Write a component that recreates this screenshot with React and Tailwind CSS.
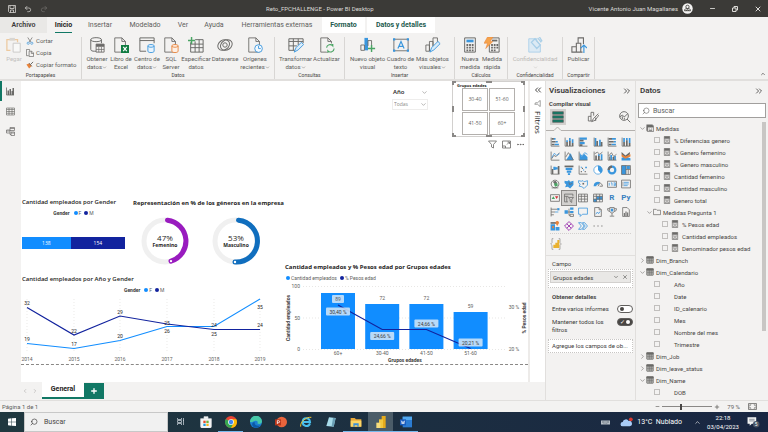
import clsx from "clsx"
import { ChevronDown, ChevronUp, ChevronRight, ChevronLeft, ChevronsLeft, ChevronsRight, Search, X, Ellipsis, Undo2, Redo2, Plus, Minus } from "lucide-react"

const GRAY = "#6b6a68"
const BLUE = "#3a96dd"

// small drawing helper: g / b are stroked paths, gf / bf are filled ones
function Glyph({ g, b, gf, bf, of, o, size = "size-[10px]", sw = 1.6, children }) {
    return (
        <svg viewBox="0 0 18 18" className={clsx("shrink-0", size)} fill="none" aria-hidden="true">
            {bf && <path d={bf} fill={BLUE} />}
            {gf && <path d={gf} fill={GRAY} />}
            {of && <path d={of} fill="#e8833a" />}
            {g && <path d={g} stroke={GRAY} strokeWidth={sw} />}
            {b && <path d={b} stroke={BLUE} strokeWidth={sw} />}
            {o && <path d={o} stroke="#e8833a" strokeWidth={sw} />}
            {children}
        </svg>
    )
}

/* ---------- title bar ---------- */

function TitleBar() {
    return (
        <header className="grid h-[17px] shrink-0 grid-cols-[266fr_502fr] items-center bg-[#3b3a37] text-[6px] text-[#dddbd8]">
            <div className="flex items-center gap-2 pl-2">
                <button aria-label="Guardar">
                    <svg viewBox="0 0 16 16" className="size-2" fill="none" stroke="currentColor" strokeWidth="1.5">
                        <path d="M1 1h14v14H3l-2-2zM4 1v6h8V1M5 15v-5h6v5" />
                    </svg>
                </button>
                <button aria-label="Deshacer"><Undo2 className="size-2" /></button>
                <button aria-label="Rehacer"><Redo2 className="size-2 text-[#73716e]" /></button>
            </div>
            <div className="flex items-center justify-between">
                <h1>Reto_FPCHALLENGE - Power BI Desktop</h1>
                <div className="flex items-center pr-[6px]">
                    <span>Vicente Antonio Juan Magallanes</span>
                    <svg viewBox="0 0 20 20" className="ml-1 size-[11px]" fill="none" stroke="#3b3a37" strokeWidth="1.5">
                        <circle cx="10" cy="10" r="9.5" fill="#f3f2f1" stroke="none" />
                        <circle cx="10" cy="7" r="3" />
                        <path d="M4.500 14c0-3 2-4 5.500-4s5.500 1 5.500 4zM7 14l3-2 3 2" />
                    </svg>
                    <button aria-label="Minimizar" className="ml-4"><Minus className="size-[7px]" strokeWidth={3} /></button>
                    <button aria-label="Restaurar" className="ml-4">
                        <svg viewBox="0 0 12 12" className="size-[6px]" fill="none" stroke="currentColor" strokeWidth="2">
                            <path d="M1 4h7v7H1zM4 4V1h7v7H8" />
                        </svg>
                    </button>
                    <button aria-label="Cerrar" className="ml-4"><X className="size-2" strokeWidth={3} /></button>
                </div>
            </div>
        </header>
    )
}

/* ---------- ribbon ---------- */

const TABS = [
    { name: "Archivo", cls: "w-[47px] bg-[#e9e8e6] font-semibold text-[#3b3a39]" },
    { name: "Inicio", cls: "w-[33px] font-bold text-[#252423]", active: true },
    { name: "Insertar", cls: "w-[40px]" },
    { name: "Modelado", cls: "w-[50px]" },
    { name: "Ver", cls: "w-[26px]" },
    { name: "Ayuda", cls: "w-[36px]" },
    { name: "Herramientas externas", cls: "w-[90px]" },
    { name: "Formato", cls: "mr-[2px] w-[43px] bg-white font-bold text-[#1c5a4e]" },
    { name: "Datos y detalles", cls: "w-[68px] bg-white font-bold text-[#1c5a4e]" },
]

function Tabs() {
    return (
        <nav className="flex h-4 shrink-0 text-[7px] text-[#605e5c]">
            {TABS.map((t) => (
                <button key={t.name} className={clsx("flex shrink-0 items-center justify-center whitespace-nowrap", t.cls)}>
                    <span className={clsx("flex h-full items-center border-y", t.active ? "border-t-transparent border-b-[#117865]" : "border-transparent")}>{t.name}</span>
                </button>
            ))}
        </nav>
    )
}

const SHEET = "M2 1h8l4 4v12H2zM10 1v4h4"

const ICONS = {
    obtener: <Glyph size="size-4" sw={1.1} g="M2 3v11c0 1.500 2 2 4 2h2M14 3v4M2 3c0-3 12-3 12 0s-12 3-12 0"><path d="M8 8h9v9H8z" fill="#f3f2f1" stroke={GRAY} /><path d="M8 8h9v3H8z" fill={GRAY} /><path d="M11 11v6M14 11v6M8 14h9" stroke={GRAY} strokeWidth=".8" /></Glyph>,
    libro: <Glyph size="size-4" sw={1} g={SHEET}><path d="M9 9h9v9H9z" fill="#107c41" /><path d="M11.500 11l4 5M15.500 11l-4 5" stroke="#fff" strokeWidth="1.300" /></Glyph>,
    centro: <Glyph size="size-4" sw={1.1} g="M8 16H1V1h16v6M1 4h16"><path d="M10 10v6c0 2 7 2 7 0v-6c0-2-7-2-7 0s7 2 7 0" fill="#e8f3fc" stroke={BLUE} /></Glyph>,
    sql: <Glyph size="size-4" sw={1} g={SHEET}><path d="M10 10v6c0 2 7 2 7 0v-6c0-2-7-2-7 0s7 2 7 0" fill="#fdf0e6" stroke="#e8833a" /></Glyph>,
    especificar: <Glyph size="size-4" sw={1.1} g="M3 6v11h14V3H8M3 8h14M3 12h14M8 5v12M12.500 3v14"><path d="M4 0v8M0 4h8" stroke="#4aa564" strokeWidth="1.600" /></Glyph>,
    dataverse: (
        <Glyph size="size-4">
            <g stroke={GRAY} strokeWidth="1.100">
                <ellipse cx="7.500" cy="9" rx="7" ry="5.500" transform="rotate(-35 7.500 9)" />
                <ellipse cx="10.500" cy="9" rx="7" ry="5.500" transform="rotate(-35 10.500 9)" />
                <circle cx="9" cy="9" r="2.500" />
            </g>
        </Glyph>
    ),
    origenes: <Glyph size="size-4" sw={1} g={SHEET}><circle cx="13" cy="13" r="4.300" fill="#f3f9fe" stroke={BLUE} /><path d="M13 10v3h2.500" stroke={BLUE} /></Glyph>,
    transformar: <Glyph size="size-4" sw={1.1} g="M8 15H1V2h16v5M1 5h16M1 10h9M6 2v13M11.500 2v7"><path d="M7 17l2-5 6-6 2.500 2.500-6 6z" fill="#d9ecfa" stroke={BLUE} /></Glyph>,
    actualizar: <Glyph size="size-4" sw={1} g={SHEET}><circle cx="12.500" cy="12.500" r="5.500" fill="#f3f2f1" /><path d="M8.500 12a4 4 0 0 1 7-2v-2M17 13a4 4 0 0 1-7 2.500v2" stroke="#4aa564" strokeWidth="1.300" /></Glyph>,
    nuevo: <Glyph size="size-4" sw={1} g="M1 15V9h4v6zM9 10V4h4v6" bf="M5 1h4v14H5z"><path d="M13 9v8M9 13h8" stroke="#4aa564" strokeWidth="1.600" /></Glyph>,
    cuadro: <Glyph size="size-4" sw={1} g="M1 2.500h16v13H1z"><path d="M5.500 13L9 5l3.500 8M6.500 10.500h5" stroke={BLUE} strokeWidth="1.300" /><path d="M0 1.500h2.500v2.500H0zM15.500 1.500H18v2.500h-2.500zM0 14h2.500v2.500H0zM15.500 14H18v2.500h-2.500z" fill={BLUE} /></Glyph>,
    mas: <Glyph size="size-4" sw={1} g="M1 16V9h4v7zM5 16V5h4v6M9 10V1h5v5"><path d="M5.500 17l2-5 7-7 2.500 2.500-7 7z" fill="#d9ecfa" stroke={BLUE} /></Glyph>,
    nueva: <Glyph size="size-4" sw={1.1} g="M3 1h12v16H3z" bf="M5 3h8v3H5z" gf="M5 8h2v2H5zM8 8h2v2H8zM11 8h2v2h-2zM5 11h2v2H5zM8 11h2v2H8zM11 11h2v2h-2zM5 14h2v2H5zM8 14h2v2H8zM11 14h2v2h-2z" />,
    medida: <Glyph size="size-4" sw={1.1} g="M6 1h11v16H6z" gf="M8 8h2v2H8zM11 8h2v2h-2zM14 8h2v2h-2zM8 11h2v2H8zM11 11h2v2h-2zM14 11h2v2h-2zM8 14h2v2H8zM11 14h2v2h-2z"><path d="M9 3h6v2H9z" fill={GRAY} /><path d="M4 0h6L7 5h3L2 13l2-6H0z" fill="#f5a34c" stroke="#e8833a" strokeWidth=".6" /></Glyph>,
    confid: <Glyph size="size-4"><path d="M2 2h9v3l4 4v8H2z" fill="#dceaf4" stroke="#a9cfe8" /><path d="M5 6l6 7 4-4-6-7zM12 1l4 5M14 0l3 5" stroke="#a9cfe8" strokeWidth="1.500" /></Glyph>,
    publicar: <Glyph size="size-4" sw={1.2} g="M1 17v-6h5v6zM6 17V7h5v10zM8 7V1h6v7M6 17h7"><path d="M14.500 18V9M11 12.500L14.500 9l3.500 3.500" stroke={BLUE} strokeWidth="1.300" /></Glyph>,
    pegar: <Glyph size="size-4"><path d="M5 15H1V3h12v3" stroke="#edc99f" strokeWidth="1.400" /><path d="M4 1h6v3H4z" fill="#d8d6d3" /><path d="M8 7h8v10H8z" fill="#f8f8f7" stroke="#c8c6c4" /></Glyph>,
}

const GROUPS = [
    {
        name: "Datos", cls: "w-[193px]", items: [
            ["obtener", "w-6", "Obtener", "datos", true],
            ["libro", "w-6", "Libro de", "Excel"],
            ["centro", "w-7", "Centro de", "datos", true],
            ["sql", "w-5", "SQL", "Server"],
            ["especificar", "w-[30px]", "Especificar", "datos"],
            ["dataverse", "w-7", "Dataverse", ""],
            ["origenes", "w-8", "Orígenes", "recientes", true],
        ]
    },
    { name: "Consultas", cls: "w-[70px]", items: [["transformar", "w-[34px]", "Transformar", "datos", true], ["actualizar", "w-7", "Actualizar", ""]] },
    {
        name: "Insertar", cls: "w-[110px]", items: [
            ["nuevo", "w-[34px]", "Nuevo objeto", "visual"],
            ["cuadro", "w-8", "Cuadro de", "texto"],
            ["mas", "w-8", "Más objetos", "visuales", true],
        ]
    },
    { name: "Cálculos", cls: "w-[53px]", items: [["nueva", "w-[22px]", "Nueva", "medida"], ["medida", "w-[22px]", "Medida", "rápida"]] },
    { name: "Confidencialidad", cls: "w-[55px]", items: [["confid", "w-[54px]", "Confidencialidad", "", true, true]] },
    { name: "Compartir", cls: "w-[32px]", items: [["publicar", "w-[30px]", "Publicar", ""]] },
]

function RibbonItem({ item }) {
    const [icon, width, line1, line2, menu, disabled] = item
    return (
        <button disabled={disabled} className={clsx("flex shrink-0 flex-col items-center whitespace-nowrap", width, disabled && "text-[#bab8b5]")}>
            {ICONS[icon]}
            <span className="mt-[2px]">{line1}</span>
            <span className="flex h-2 items-center">{line2}{menu && <ChevronDown className="size-[5px]" />}</span>
        </button>
    )
}

function GroupName({ children }) {
    return <p className="mt-auto text-center text-[5px] leading-[7px] text-[#484644]">{children}</p>
}

function Ribbon() {
    return (
        <div className="flex h-12 shrink-0 border-b-2 border-[#e1dfdd] pt-1 text-[6px] leading-[8px] text-[#605e5c]">
            <section className="flex w-[82px] shrink-0 flex-col border-r border-[#d8d6d4]">
                <div className="flex pl-[6px]">
                    <button disabled className="flex w-4 flex-col items-center text-[#c2c0be]">
                        {ICONS.pegar}
                        <span className="mt-[2px]">Pegar</span>
                    </button>
                    <div className="ml-1 flex flex-col gap-1 whitespace-nowrap">
                        <button className="flex items-center gap-[2px]">
                            <Glyph size="size-2" g="M4 1l7 11M14 1L7 12"><circle cx="5" cy="14" r="2.500" stroke={BLUE} strokeWidth="1.500" /><circle cx="13" cy="14" r="2.500" stroke={BLUE} strokeWidth="1.500" /></Glyph>
                            Cortar
                        </button>
                        <button className="flex items-center gap-[2px]">
                            <Glyph size="size-2" g="M6 15H1V1h7v3M7 5h6l4 4v8H7zM12 5v5h5" />
                            Copia
                        </button>
                        <button className="flex items-center gap-[2px]">
                            <Glyph size="size-2" of="M1 8l7-3 5 6-6 6z" g="M7 5l6 7M10 8l6-6" sw={2.2} />
                            Copiar formato
                        </button>
                    </div>
                </div>
                <GroupName>Portapapeles</GroupName>
            </section>
            {GROUPS.map((g) => (
                <section key={g.name} className={clsx("flex shrink-0 flex-col border-r border-[#d8d6d4]", g.cls)}>
                    <div className="flex justify-center">
                        {g.items.map((it) => <RibbonItem key={it[0]} item={it} />)}
                    </div>
                    <GroupName>{g.name}</GroupName>
                </section>
            ))}
            <button aria-label="Contraer cinta" className="mt-auto ml-auto p-[2px]"><ChevronUp className="size-[6px]" strokeWidth={3} /></button>
        </div>
    )
}

/* ---------- left navigation ---------- */

function SideNav() {
    return (
        <nav className="flex w-[21px] shrink-0 flex-col bg-[#f3f2f1]">
            <button aria-label="Informe" className="flex h-5 items-center border-l-2 border-[#117865] pl-1">
                <Glyph size="size-[9px]" g="M1 1v15h15" gf="M3 7h3v9H3zM7 4h3v12H7zM11 8h2v8h-2zM13 2h3v14h-3z" />
            </button>
            <button aria-label="Datos" className="flex h-5 items-center pl-[6px]">
                <Glyph size="size-[9px]" sw={1.3} g="M1 2h16v14H1zM1 5h16M1 9h16M1 12.500h16M6 2v14M12 2v14" />
            </button>
            <button aria-label="Modelo" className="flex h-5 items-center pl-[6px]">
                <Glyph size="size-[9px]" sw={1.4} g="M8 1h9v6H8zM1 6h7v6H1zM10 10h7v7h-7zM8 12v3h2M8 3h9M10 12h7M1 8h7" />
            </button>
        </nav>
    )
}

/* ---------- report canvas ---------- */

function Legend({ label, items }) {
    return (
        <div className="flex items-center gap-[3px] font-[Roboto,sans-serif] text-[5px] leading-[6px] text-[#605e5c]">
            {label && <b className="mr-px font-bold text-[#3b3a39]">{label}</b>}
            {items.map(([name, color]) => (
                <span key={name} className="flex items-center gap-px">
                    <i className={clsx("size-1 rounded-full", color)} />{name}
                </span>
            ))}
        </div>
    )
}

const FM = [["F", "bg-[#118dff]"], ["M", "bg-[#12239e]"]]

function Gauge({ value, name, color, end }) {
    return (
        <figure className="grid size-12 place-items-center">
            <svg viewBox="0 0 48 48" className="col-start-1 row-start-1 w-full" fill="none" strokeWidth="5">
                <circle cx="24" cy="24" r="21" stroke="#f0f0f0" />
                <path d={`M26.500 3.150A21 21 0 0 1 ${end[0]} ${end[1]}`} stroke={color} strokeLinecap="round" />
                <circle cx={end[0]} cy={end[1]} r="1.200" fill="#fff" />
            </svg>
            <figcaption className="col-start-1 row-start-1 flex flex-col items-center text-[#252423]">
                <span className="text-[8px] leading-[8px]">{value}</span>
                <b className="text-[5px] leading-[6px]">{name}</b>
            </figcaption>
        </figure>
    )
}

const YEARS = [2014, 2015, 2016, 2017, 2018, 2019]
const XS = [6, 53, 99, 146, 193, 239]
const M = [[32, 30.5, 26], [22, 58, 54], [29, 39, 35], [25, 47, 46], [25, 52.5, 57], [24, 52.5, 48]]
const F = [[19, 66.5, 62], [17, 71.5, 67], [20, 63.5, 59], [26, 49.5, 54], [24, 49.5, 48], [35, 22, 30]]

function LineChart() {
    const line = (s) => s.map((p, i) => `${XS[i]},${p[1]}`).join(" ")
    return (
        <svg viewBox="0 0 264 87" className="w-full font-[Roboto,sans-serif]" fontSize="5" textAnchor="middle" fill="#252423" role="img" aria-label="Cantidad empleados por Año y Gender">
            {XS.map((x) => <path key={x} d={`M${x} 22V76`} stroke="#dddbd9" strokeWidth=".6" strokeDasharray="1 2" />)}
            <polyline points={line(F)} fill="none" stroke="#118dff" strokeWidth="1.200" />
            <polyline points={line(M)} fill="none" stroke="#12239e" strokeWidth="1.200" />
            {[...M, ...F].map((p, i) => <text key={i} x={XS[i % 6]} y={p[2] + 2}>{p[0]}</text>)}
            {YEARS.map((y, i) => <text key={y} x={XS[i]} y="84" fill="#605e5c">{y}</text>)}
        </svg>
    )
}

const BARS = [
    { name: "60+", n: 89, top: 11, py: 23, pct: "30,40 %", ly: 29.5 },
    { name: "30-40", n: 72, top: 22, py: 47.5, pct: "24,66 %", ly: 54 },
    { name: "41-50", n: 72, top: 22, py: 47.5, pct: "24,66 %", ly: 41.5 },
    { name: "51-60", n: 59, top: 30, py: 66.5, pct: "20,21 %", ly: 60.5 },
]

function ComboChart() {
    const cx = (i) => 53 + i * 44.2
    return (
        <svg viewBox="0 0 243 82" className="mt-px w-full font-[Roboto,sans-serif]" fontSize="5" textAnchor="middle" fill="#605e5c" role="img" aria-label="Cantidad empleados y % Pesos edad por Grupos edades">
            <path d="M18 4.500H221M18 36H221M18 67.500H221" stroke="#d8d6d4" strokeWidth=".6" strokeDasharray="1 2" />
            <g textAnchor="end"><text x="15" y="6">100</text><text x="15" y="38">50</text><text x="15" y="69">0</text></g>
            <text x="229" y="27">30 %</text>
            <text x="229" y="69">20 %</text>
            {BARS.map((b, i) => <rect key={b.name} x={cx(i) - 17} y={b.top} width="34" height={67 - b.top} fill="#118dff" />)}
            <polyline points={BARS.map((b, i) => `${cx(i)},${b.py}`).join(" ")} fill="none" stroke="#12239e" strokeWidth="1.200" />
            {BARS.map((b, i) => (
                <g key={b.name}>
                    {i === 0 && <rect x={cx(i) - 6} y="13" width="12" height="8" rx="1" fill="#d6e8f8" fillOpacity=".85" />}
                    <text x={cx(i)} y={i === 0 ? 19 : b.top - 4}>{b.n}</text>
                    <rect x={cx(i) - 12} y={b.ly - 4} width="24" height="8" rx="1" fill="#d6e8f8" fillOpacity=".85" />
                    <text x={cx(i)} y={b.ly + 2} fill="#3b3a39">{b.pct}</text>
                    <text x={cx(i)} y="73">{b.name}</text>
                </g>
            ))}
            <g fontWeight="700" fill="#3b3a39">
                <text x="120" y="80">Grupos edades</text>
                <text transform="translate(5 36) rotate(-90)">Cantidad empleados</text>
                <text transform="translate(241 36) rotate(-90)">% Pesos edad</text>
            </g>
        </svg>
    )
}

const HANDLES = [
    "-top-px -left-px h-1 w-1 border-t-2 border-l-2", "-top-px -right-px h-1 w-1 border-t-2 border-r-2",
    "-bottom-px -left-px h-1 w-1 border-b-2 border-l-2", "-right-px -bottom-px h-1 w-1 border-r-2 border-b-2",
    "-top-px left-1/2 h-0 w-[6px] -translate-x-1/2 border-t-2", "-bottom-px left-1/2 h-0 w-[6px] -translate-x-1/2 border-b-2",
    "top-1/2 -left-px h-[6px] w-0 -translate-y-1/2 border-l-2", "top-1/2 -right-px h-[6px] w-0 -translate-y-1/2 border-l-2",
]

function Slicers() {
    return (
        <div className="flex h-[114px] justify-end pr-[3px] text-[6px] text-[#605e5c]">
            <div className="mt-[7px] mr-6 w-9">
                <div className="flex items-center justify-between">
                    <label htmlFor="anio" className="pl-px leading-[9px] font-semibold text-[#252423]">Año</label>
                    <ChevronDown className="size-[7px]" strokeWidth={1.5} />
                </div>
                <div className="mt-[2px] grid items-center border border-[#eeedec]">
                    <select id="anio" className="col-start-1 row-start-1 h-[9px] appearance-none pl-px text-[5px] leading-[9px] text-[#8a8886]">
                        <option>Todas</option>
                    </select>
                    <ChevronDown className="pointer-events-none col-start-1 row-start-1 size-[7px] justify-self-end" strokeWidth={1.5} />
                </div>
            </div>
            <div className="w-[73px]">
                <div className="relative h-[56px] border border-[#d2d0ce] px-1 pt-px">
                    {HANDLES.map((h) => <i key={h} className={clsx("absolute border-[#8a8886]", h)} />)}
                    <p className="text-[4px] leading-[5px] font-bold text-[#252423]">Grupos edades</p>
                    <div className="grid grid-cols-2 gap-px px-[5px] text-[5px]">
                        {["30-40", "51-60", "41-50", "60+"].map((r) => (
                            <button key={r} className="h-[23px] border border-[#b3b0ad]">{r}</button>
                        ))}
                    </div>
                </div>
                <div className="mt-[3px] flex justify-end gap-[5px]">
                    <button aria-label="Filtros del objeto"><Glyph size="size-[9px]" g="M1 2h16l-6 7v7l-4-2V9z" /></button>
                    <button aria-label="Modo de enfoque"><Glyph size="size-[9px]" g="M1 2h16v14H1zM1 12h6v4M10 9l5-5M11 4h4v4" /></button>
                    <button aria-label="Más opciones"><Ellipsis className="size-[9px]" /></button>
                </div>
            </div>
        </div>
    )
}

function Canvas() {
    return (
        <main className="flex-1 overflow-hidden bg-white">
            <div className="border-b border-dashed border-[#8a8886]">
                <Slicers />
                <div className="grid h-[66px] grid-cols-[112fr_395fr]">
                    <section className="pr-2 pl-px">
                        <h2 className="pt-[3px] text-[6px] leading-[8px] font-semibold whitespace-nowrap text-[#252423]">Cantidad empleados por Gender</h2>
                        <div className="mt-1 flex justify-center"><Legend label="Gender" items={FM} /></div>
                        <div className="mt-[21px] grid h-3 grid-cols-[138fr_154fr] text-center text-[5px] leading-[12px] text-white">
                            <span className="bg-[#118dff]">138</span>
                            <span className="bg-[#12239e]">154</span>
                        </div>
                    </section>
                    <section>
                        <h2 className="pt-1 text-[6px] leading-[8px] font-bold text-[#252423]">Representación en % de los géneros en la empresa</h2>
                        <div className="mt-[10px] flex gap-[23px] pl-2">
                            <Gauge value="47%" name="Femenino" color="#991bbf" end={[30, 44.1]} />
                            <Gauge value="53%" name="Masculino" color="#106ebe" end={[23, 45]} />
                        </div>
                    </section>
                </div>
                <div className="grid grid-cols-[264fr_243fr]">
                    <section>
                        <h2 className="pt-[14px] pl-px text-[6px] leading-[8px] font-semibold text-[#252423]">Cantidad empleados por Año y Gender</h2>
                        <div className="-mb-4 pt-1 pl-[103px]"><Legend label="Gender" items={FM} /></div>
                        <LineChart />
                    </section>
                    <section>
                        <h2 className="pt-[2px] text-[6px] leading-[8px] font-bold whitespace-nowrap text-[#252423]">Cantidad empleados y % Pesos edad por Grupos edades</h2>
                        <div className="pt-1 pl-px"><Legend items={[["Cantidad empleados", "bg-[#118dff]"], ["% Pesos edad", "bg-[#12239e]"]]} /></div>
                        <ComboChart />
                    </section>
                </div>
            </div>
        </main>
    )
}

function PageTabs() {
    return (
        <footer className="flex h-[18px] shrink-0 items-stretch bg-[#f3f2f1] text-[6px]">
            <button aria-label="Página anterior" className="ml-px"><ChevronLeft className="size-[6px] text-[#a19f9d]" /></button>
            <button aria-label="Página siguiente" className="mr-1 ml-1"><ChevronRight className="size-[6px] text-[#a19f9d]" /></button>
            <button className="mb-px w-[42px] border-b-2 border-[#117865] bg-white text-[7px] font-bold text-[#252423]">General</button>
            <button aria-label="Nueva página" className="mt-px mb-px grid w-5 place-items-center bg-[#117865] text-white"><Plus className="size-2" strokeWidth={4} /></button>
        </footer>
    )
}

/* ---------- filters + visualizations ---------- */

function FilterStrip() {
    return (
        <aside className="flex w-[17px] shrink-0 flex-col items-center border-l-2 border-[#edebe9] bg-white pt-1 text-[#252423]">
            <button aria-label="Expandir filtros"><ChevronsLeft className="size-[10px]" strokeWidth={2} /></button>
            <Glyph size="mt-[5px] size-[7px] rotate-90" g="M1 2h16l-6 7v7l-4-2V9z" />
            <span className="mt-1 text-[8px] leading-[10px] font-medium [writing-mode:vertical-rl]">Filtros</span>
        </aside>
    )
}

const AX = "M2 1V16.500H17"

const VISUALS = [
    ["Barras apiladas", { g: AX, gf: "M3 2h4v3H3zM3 7h7v3H3zM3 12h5v3H3z", bf: "M7 2h3v3H7zM10 7h4v3h-4zM8 12h8v3H8z" }],
    ["Columnas apiladas", { g: AX, gf: "M4 9h3v7H4zM9 7h3v9H9zM14 11h3v5h-3z", bf: "M4 6h3v3H4zM9 2h3v5H9zM14 4h3v7h-3z" }],
    ["Barras agrupadas", { g: AX, gf: "M3 5h7v3H3zM3 13h5v3H3z", bf: "M3 1h13v4H3zM3 9h9v4H3z" }],
    ["Columnas agrupadas", { g: AX, gf: "M6 7h3v9H6zM14 9h3v7h-3z", bf: "M3 2h3v14H3zM11 5h3v11h-3z" }],
    ["Barras 100%", { g: AX, gf: "M3 2h6v3H3zM3 7h9v3H3zM3 12h5v3H3z", bf: "M9 2h7v3H9zM12 7h4v3h-4zM8 12h8v3H8z" }],
    ["Columnas 100%", { g: AX, gf: "M4 9h3v7H4zM9 6h3v10H9zM14 11h3v5h-3z", bf: "M4 2h3v7H4zM9 2h3v4H9zM14 2h3v9h-3z" }],
    ["Líneas", { g: AX + "M3 14l4-6 4 2 6-7", b: "M3 12l5-8 4 4 5-3" }],
    ["Áreas", { g: AX + "M3 11l5-8 9 13", bf: "M4 16l8-12 5 12z" }],
    ["Áreas apiladas", { g: AX, bf: "M3 16V5l4 5 4-5 6 6v5z", b: "M3 4l4 5 5-6 5 3" }],
    ["Líneas y columnas apiladas", { g: AX + "M3 5l5-3 4 4 5-4", gf: "M4 8h3v8H4zM9 9h3v7H9z", bf: "M9 6h3v4H9zM14 6h3v10h-3z" }],
    ["Líneas y columnas agrupadas", { g: AX + "M3 9l5-6 4 7 5-4", gf: "M4 10h2v6H4zM10 11h3v5h-3z", bf: "M6 7h3v9H6zM13 9h3v7h-3z" }],
    ["Cinta", { gf: "M1 2l7 6 8-6v4l-8 7-7-7z", of: "M1 6l7 4 9-4v4l-9 4-7-4z", bf: "M1 12l7-2 9 3v4H1z" }],
    ["Cascada", { g: AX, gf: "M3 7h3v9H3zM14 2h3v14h-3z", bf: "M6 3h4v6H6zM10 4h4v4h-4z" }],
    ["Embudo", { bf: "M3 5h12v4H3zM5 10h8v4H5zM7 15h4v3H7z", gf: "M1 1h16v3H1z" }],
    ["Dispersión", { g: AX, gf: "M5 11h2v2H5zM12 11h2v2h-2zM7 5h2v2H7z", bf: "M9 8h2v2H9zM13 3h3v3h-3zM5 3h2v2H5z" }],
    ["Circular", { children: <><circle cx="9" cy="9" r="7.500" fill="#fff" stroke={BLUE} strokeWidth="1.300" /><path d="M9 1a8 8 0 0 1 5 14L9 9z" fill={BLUE} /></> }],
    ["Anillo", { children: <><circle cx="9" cy="9" r="6" stroke={BLUE} strokeWidth="4" /><path d="M9 3a6 6 0 0 0-6 6" stroke={GRAY} strokeWidth="4" /></> }],
    ["Treemap", { bf: "M1 1h8v16H1zM10 2h6v5h-6z", g: "M1 1h16v16H1zM9 1v16M9 8h8M13 8v9" }],
    ["Mapa", { g: "M9 2a7 7 0 1 0 .1 0M3 16h12", gf: "M5 5l5-2 3 4-4 3z", children: <path d="M7 8l6-1 1 5-5 2z" fill="#4aa564" /> }],
    ["Mapa coroplético", { bf: "M1 3l5 1 3-2 2 3 6-2v8l-6 6-4-3-5 1 2-5-3-3z", g: "M9 6l1 4 5-2" }],
    ["Mapa de formas", { b: "M1 3l5 1 3-1 2 2 6-2v8l-6 6-4-3-5-1 2-4-3-2z", gf: "M8 7h3v3H8z" }],
    ["Medidor", { bf: "M1 13a8 8 0 0 1 12-7l-3 4a3 3 0 0 0-4 3z", g: "M12 7c3 1 5 3 5 6h-5M9 13l3-5" }],
    ["Tarjeta", { g: "M1 4h16v11H1z", b: "M4 7v5M7 7h2v5M12 7h3v5h-3M12 9.500h3" }],
    ["Tarjeta de varias filas", { g: "M1 2h16v14H1z", b: "M5 6h9M5 9h9M5 12h7", gf: "M3 5h1v8H3z" }],
    ["KPI", { g: "M1 3h16v12H1z", children: <><path d="M3 11l3-5 3 5z" fill="#4aa564" /><path d="M9 6h6l-3 5z" fill="#d13438" /></> }],
    ["Segmentación", { g: "M1 2h15v4M1 2v14h6M1 6h7M5 6v10M8 8h9l-3 4v5l-3-2v-3z" }],
    ["Tabla", { g: "M1 2h16v14H1zM1 6h16M1 11h16M6 2v14M12 2v14" }],
    ["Matriz", { bf: "M6 6h11v6H6zM1 11h6v5H1z", g: "M1 2h16v14H1zM1 6h16M1 11h16M6 2v14M12 2v14" }],
    ["R", { text: "R" }],
    ["Python", { text: "Py" }],
    ["Elementos clave", { g: "M2 1v16M2 4h11M2 9h7M2 14h5", bf: "M13 2h4v4h-4z", b: "M9 9h6" }],
    ["Árbol de descomposición", { bf: "M1 6h6v6H1zM11 1h6v4h-6zM11 7h6v4h-6z", g: "M7 9h4M9 3v12h2M11 13h6v4h-6z" }],
    ["Preguntas y respuestas", { b: "M1 2h16v11H8l-4 4v-4H1z" }],
    ["Narración", { g: "M3 1h8l4 4v12H3zM11 1v4h4", b: "M5 13l3-4 2 3 3-4" }],
    ["Objetivos", { g: "M5 1h8v6c0 5-8 5-8 0zM9 11v5M5 16.500h8M5 3H1c0 4 2 5 4 5M13 3h4c0 4-2 5-4 5", bf: "M7 3h4v5H7z" }],
    ["Informe paginado", { g: "M3 1h8l4 4v12H3z", gf: "M5 11h2v5H5zM8 8h2v8H8zM11 10h2v6h-2z" }],
    ["ArcGIS", { gf: "M1 2h10v3H1z", bf: "M1 6h8v11H1zM10 11h7v6h-7z", of: "M13 0a3 3 0 0 1 3 4l-3 5-3-5a3 3 0 0 1 3-4zM4 9h3v4H4z" }],
    ["Power Apps", { children: <path d="M9 1l8 8-8 8-8-8zM5 5l8 8M13 5l-8 8" stroke="#a345b5" strokeWidth="1.800" /> }],
    ["Power Automate", { b: "M1 3h5l5 6-5 6H1l5-6zM8 3h4l5 6-5 6H8l5-6z" }],
    ["Más visuales", { gf: "M1 8h2v2H1zM8 8h2v2H8zM15 8h2v2h-2z" }],
]

function Toggle({ label, on }) {
    return (
        <label className="flex items-start justify-between leading-[8px]">
            <span>{label}</span>
            <input
                type="checkbox"
                defaultChecked={on}
                className="flex h-2 w-4 shrink-0 appearance-none items-center justify-between rounded-full border border-[#605e5c] bg-white px-[2px] before:size-1 before:rounded-full before:bg-[#484644] checked:flex-row-reverse checked:bg-[#484644] checked:before:bg-white checked:after:text-[6px] checked:after:leading-[6px] checked:after:text-white checked:after:content-['✓']"
            />
        </label>
    )
}

function Visualizations() {
    return (
        <aside className="flex w-[91px] shrink-0 flex-col border-x border-[#e1dfdd] bg-[#f3f2f1] text-[6px] text-[#3b3a39]">
            <div className="flex items-center justify-between px-[3px] pt-1">
                <h2 className="text-[8px] leading-[11px] font-semibold">Visualizaciones</h2>
                <button aria-label="Contraer"><ChevronsRight className="size-[10px]" strokeWidth={2} /></button>
            </div>
            <p className="mt-[3px] pl-[3px] leading-[9px] font-semibold">Compilar visual</p>
            <div className="mt-px flex items-center justify-between px-1">
                <button aria-label="Compilar" className="grid size-4 place-items-center bg-[#d2d0ce]">
                    <Glyph size="size-3"><path d="M1 1h16v4H1zM1 7h16v4H1zM1 13h16v4H1z" fill="#117865" stroke="#605e5c" /></Glyph>
                </button>
                <button aria-label="Formato"><Glyph size="size-3" sw={1.3} g="M2 15V8h4M6 15V2h4v5M2 15h5M17 4l-7 7-3 5 5-2 6-8M13 10v5" /></button>
                <button aria-label="Análisis"><Glyph size="size-3" sw={1.4} g="M7.500 1a6.500 6.500 0 1 0 .1 0M12 12l5 5M1 9l4-3 3 3 5-5M5 8v4M8 10v3" /></button>
            </div>
            <svg viewBox="0 0 89 5" className="mt-px w-full" fill="none" stroke="#b3b0ad"><path d="M0 4.500H8L11.500 1 15 4.500H89" /></svg>
            <div className="mt-1 grid grid-cols-6 px-[2px]">
                {VISUALS.map(([name, icon], i) => (
                    <button key={name} aria-label={name} className={clsx("grid h-[14px] place-items-center", i === 25 && "bg-[#d2d0ce] outline outline-[#8a8886]")}>
                        {icon.text ? <b className="text-[8px] leading-[10px] text-[#3a80c0]">{icon.text}</b> : <Glyph sw={1.4} {...icon} />}
                    </button>
                ))}
            </div>
            <div className="mx-1 border-t border-dotted border-[#d2d0ce] pt-1">
                <button aria-label="Visual personalizado" className="block">
                    <Glyph size="size-3"><path d="M5 1H3v6L1 9l2 2v6h2M13 1h2v6l2 2-2 2v6h-2" stroke="#a19f9d" strokeWidth="1.300" /><path d="M5 10h3v5H5zM8 7h3v8H8zM11 3h3v12h-3z" fill="#eab12f" /></Glyph>
                </button>
            </div>
            <div className="mt-[5px] flex flex-col border-t border-[#e1dfdd] px-[2px] pt-[3px]">
                <p className="pl-1 leading-[9px]">Campo</p>
                <div className="mt-px border border-dotted border-[#c8c6c4] bg-white p-px pb-1">
                    <div className="flex h-3 items-center gap-[3px] border border-[#d2d0ce] bg-[#e9e8e6] px-[2px]">
                        <span className="flex-1 whitespace-nowrap">Grupos edades</span>
                        <button aria-label="Opciones"><ChevronDown className="size-[6px]" /></button>
                        <button aria-label="Quitar"><X className="size-[6px]" /></button>
                    </div>
                </div>
                <h3 className="mt-1 pl-1 leading-[9px] font-semibold">Obtener detalles</h3>
                <div className="mt-1 flex flex-col gap-[5px] pl-1">
                    <Toggle label="Entre varios informes" />
                    <Toggle label="Mantener todos los filtros" on />
                </div>
                <p className="mt-[5px] border border-dotted border-[#c8c6c4] bg-white px-[3px] leading-[12px] whitespace-nowrap">Agregue los campos de ob...</p>
            </div>
        </aside>
    )
}

/* ---------- data pane ---------- */

const TREE = [
    { t: "Medidas", kind: "calc", open: true },
    { t: "% Diferencias genero", m: 1 },
    { t: "% Genero femenino", m: 1 },
    { t: "% Genero masculino", m: 1 },
    { t: "Cantidad femenino", m: 1 },
    { t: "Cantidad masculino", m: 1 },
    { t: "Genero total", m: 1 },
    { t: "Medidas Pregunta 1", kind: "folder", open: true },
    { t: "% Pesos edad", m: 1, deep: true },
    { t: "Cantidad empleados", m: 1, deep: true },
    { t: "Denominador pesos edad", m: 1, deep: true },
    { t: "Dim_Branch", kind: "table" },
    { t: "Dim_Calendario", kind: "table", open: true },
    { t: "Año" }, { t: "Date" }, { t: "ID_calenario" }, { t: "Mes" }, { t: "Nombre del mes" }, { t: "Trimestre" },
    { t: "Dim_Job", kind: "table" },
    { t: "Dim_leave_status", kind: "table" },
    { t: "Dim_Name", kind: "table", open: true },
    { t: "DOB" },
]

const CALC = { g: "M3 1h12v16H3z", gf: "M3 1h12v5H3zM5 8h2v2H5zM11 8h2v2h-2zM5 13h2v2H5zM11 13h2v2h-2zM8 8h2v7H8z" }

function TreeRow({ row }) {
    if (row.kind) {
        const Chevron = row.open ? ChevronDown : ChevronRight
        return (
            <li className={clsx("flex h-3 items-center", row.kind === "folder" ? "pl-[10px]" : "pl-[3px]")}>
                <button aria-label={row.t}><Chevron className="size-[7px]" strokeWidth={1.5} /></button>
                {row.kind === "folder" && <Glyph size="size-2" g="M1 3h6l2 2h8v10H1z" />}
                {row.kind === "calc" && <Glyph size="size-2" g="M3 4h14v13H3z" gf="M1 1h14v3H4v11H1zM4 4h12v4H4zM6 10h2v2H6zM12 10h2v2h-2zM6 13h8v2H6z" />}
                {row.kind === "table" && <Glyph size="size-2" gf="M1 1h16v4H1z" sw={2.2} g="M2 2h14v14H2zM2 6.500h14M2 11h14M7 2v14M11.500 2v14" />}
                <span className="ml-[2px]">{row.t}</span>
            </li>
        )
    }
    return (
        <li className={clsx("flex h-3 items-center", row.deep ? "pl-[26px]" : "pl-[18px]")}>
            <label className="flex items-center gap-[3px]">
                <input type="checkbox" className="size-[6px] appearance-none border border-[#c1bfbd]" />
                <span className="w-2">{row.m && <Glyph size="size-2" {...CALC} />}</span>
                {row.t}
            </label>
        </li>
    )
}

function DataPane() {
    return (
        <aside className="flex w-[132px] shrink-0 flex-col overflow-hidden bg-[#f3f2f1] text-[6px] text-[#484644]">
            <div className="flex items-center justify-between px-1 pt-1">
                <h2 className="text-[8px] leading-[11px] font-semibold text-[#3b3a39]">Datos</h2>
                <button aria-label="Contraer"><ChevronsRight className="size-[10px]" strokeWidth={2} /></button>
            </div>
            <label className="mx-[2px] mt-[7px] flex h-[15px] shrink-0 items-center gap-[3px] border border-[#a19f9d] bg-white px-[3px]">
                <Search className="size-2 shrink-0 -scale-x-100" strokeWidth={1.5} />
                <input type="search" aria-label="Buscar campos" placeholder="Buscar" className="w-full text-[7px] leading-[10px] outline-none placeholder:text-[#605e5c]" />
            </label>
            <div className="mt-1 flex min-h-0 flex-1 justify-between pr-[2px]">
                <ul className="whitespace-nowrap">{TREE.map((r, i) => <TreeRow key={i} row={r} />)}</ul>
                <div className="h-3/4 w-1 bg-[#c8c6c4]" />
            </div>
        </aside>
    )
}

/* ---------- status bar + taskbar ---------- */

function StatusBar() {
    return (
        <div className="flex h-3 shrink-0 items-center border-t border-[#e1dfdd] pr-[11px] pl-[2px] text-[6px] text-[#605e5c]">
            <span className="flex-1">Página 1 de 1</span>
            <button aria-label="Alejar"><Minus className="size-[5px]" strokeWidth={3} /></button>
            <input type="range" aria-label="Zoom" min="10" max="400" defaultValue="150" className="mx-[2px] h-[6px] w-[50px] appearance-none bg-[linear-gradient(#8a8886,#8a8886)] bg-[length:100%_1px] bg-center bg-no-repeat [&::-webkit-slider-thumb]:h-[6px] [&::-webkit-slider-thumb]:w-[2px] [&::-webkit-slider-thumb]:appearance-none [&::-webkit-slider-thumb]:bg-[#484644]" />
            <button aria-label="Acercar"><Plus className="size-[6px]" strokeWidth={3} /></button>
            <span className="ml-[7px]">79 %</span>
            <button aria-label="Ajustar a la página" className="ml-2"><Glyph size="size-[9px]" g="M1 3h16v12H1z" gf="M3 5h4L3 9zM15 5v4l-4-4zM3 13V9l4 4zM15 13h-4l4-4z" /></button>
        </div>
    )
}

const APPS = [
    ["Vista de tareas", false, <path d="M3 2v3h8V2M3 16v-3h8v3M3 7h8v4H3zM15 2v14M14 7h2" stroke="#c9d2d8" strokeWidth="1.500" />],
    ["Store", false, <><path d="M1 4h16v12c0 1-1 2-2 2H3c-1 0-2-1-2-2zM6 4V1h6v3" fill="#f5f5f5" stroke="#dfe3e6" /><path d="M5 7h3.500v3.500H5z" fill="#e74c2b" /><path d="M9.500 7H13v3.500H9.500z" fill="#6bb43b" /><path d="M5 11.500h3.500V15H5z" fill="#1f9bde" /><path d="M9.500 11.500H13V15H9.500z" fill="#f6b91d" /></>],
    ["Chrome", true, <><circle cx="9" cy="9" r="9" fill="#ea4335" /><path d="M9 9L1.200 4.500A9 9 0 0 0 9 18l4-7z" fill="#34a853" /><path d="M9 5h8a9 9 0 0 1-8 13l4-7z" fill="#fbbc05" /><circle cx="9" cy="9" r="4.300" fill="#fff" /><circle cx="9" cy="9" r="3.300" fill="#4285f4" /></>],
    ["Edge", false, <><circle cx="9" cy="9" r="9" fill="#1b7fd1" /><path d="M0 9a9 9 0 0 1 18-1c0 4-5 5-7 3 1-1 1-4-2-4-4 0-5 3-9 2z" fill="#47c8a8" /><path d="M7 9c-1 5 4 7 9 5-3 4-9 5-12 1-2-3 0-6 3-6z" fill="#0c59a4" /></>],
    ["PowerPoint", false, <><circle cx="10" cy="9" r="8" fill="#e8643c" /><path d="M0 5h9v9H0z" fill="#b7361b" /><path d="M3.500 12V7h2c2 0 2 3 0 3h-2" stroke="#fff" strokeWidth="1.200" /></>],
    ["Internet Explorer", false, <><path d="M15 11c-2 6-11 5-11-2s10-8 11 0H5" stroke="#49c0ee" strokeWidth="3" /><path d="M1 16C0 9 9 1 17 2" stroke="#f2c530" strokeWidth="1.500" /></>],
    ["Bloc de notas", false, <><path d="M6 2l10 1-3 13-11-1z" fill="#a8dcea" /><path d="M12 3l4 0-3 13-3-1z" fill="#6a9fb5" /></>],
    ["Explorador", true, <><path d="M1 3h6l2 2h8v11H1z" fill="#e9a93a" /><path d="M1 7h16v9H1z" fill="#fbd566" /><path d="M5 11h8v5h-2v-2H7v2H5z" fill="#3a8fd8" /></>],
    ["Power BI", true, <><path d="M10 0h6v18h-6z" fill="#e5ab1c" /><path d="M6 5h6v13H6z" fill="#f2c83e" /><path d="M2 10h6v8H2z" fill="#f8dd7c" /></>],
    ["Word", true, <><path d="M4 1h14v16H4z" fill="#2b7cd3" /><path d="M4 1h14v5H4z" fill="#52a9f0" /><path d="M0 5h9v9H0z" fill="#185abd" /><path d="M2 7l1.300 5L4.500 8l1.200 4L7 7" stroke="#fff" /></>],
]

function Taskbar() {
    return (
        <footer className="flex h-5 shrink-0 items-stretch bg-linear-to-r from-[#20383f] to-[#192642] text-white">
            <button aria-label="Inicio" className="grid w-6 place-items-center">
                <svg viewBox="0 0 16 16" className="size-2" fill="#fff"><path d="M0 1.500l7-1V7.500H0zM8 .5L16 0v7.500H8zM0 8.500h7v7l-7-1zM8 8.500h8V16l-8-.5z" /></svg>
            </button>
            <label className="flex w-36 items-center gap-[6px] border border-[#c8c8c8] bg-[#f1f1f1] pl-[5px] text-[#3b3a39]">
                <Search className="size-2 shrink-0 -scale-x-100" />
                <input type="search" aria-label="Buscar en Windows" placeholder="Buscar" className="w-full text-[7px] outline-none placeholder:text-[#484644]" />
            </label>
            {APPS.map(([name, running, art]) => (
                <button key={name} aria-label={name} className={clsx("grid w-[25px] place-items-center border-b", running ? "border-[#76b9ed]" : "border-transparent", name === "Power BI" && "bg-[#4b5c68]")}>
                    <svg viewBox="0 0 18 18" className={name === "Vista de tareas" ? "size-[9px]" : "size-3"} fill="none">{art}</svg>
                </button>
            ))}
            <div className="ml-auto flex items-center pr-2 text-[7px]">
                <svg viewBox="0 0 18 10" className="h-[5px] w-[9px]" fill="#b8c0c8"><path d="M0 1h18v8H0z" /><path d="M2 3h14M2 5h14M5 7h8" stroke="#4d5865" strokeDasharray="1.500 1" /></svg>
                <svg viewBox="0 0 24 18" className="ml-[10px] h-[10px] w-[13px]"><path d="M5 17a4 4 0 0 1 0-8 6 6 0 0 1 11-2 5 5 0 0 1 2 10z" fill="#a9cdf8" /><circle cx="20" cy="4" r="3.500" fill="#d8382e" /></svg>
                <span className="ml-1">13°C&nbsp; Nublado</span>
                <button aria-label="Mostrar iconos ocultos" className="ml-3"><ChevronUp className="size-[7px]" /></button>
                <div className="ml-[6px] text-center text-[6px] leading-[9px]"><p>22:18</p><p>03/04/2023</p></div>
                <button aria-label="Notificaciones" className="ml-2">
                    <svg viewBox="0 0 24 22" className="h-[12px] w-[13px]"><path d="M1 2h16v12H9l-4 4v-4H1z" fill="#f3f3f3" /><path d="M4 6h10M4 9h10" stroke="#39445a" /><circle cx="17" cy="15" r="6" fill="#4c5565" /><text x="17" y="18" fontSize="9" textAnchor="middle" fill="#fff">5</text></svg>
                </button>
            </div>
        </footer>
    )
}

export default function App() {
    return (
        <div className="flex h-screen flex-col overflow-hidden bg-[#f3f2f1] font-[Roboto,sans-serif]">
            <TitleBar />
            <Tabs />
            <Ribbon />
            <div className="flex min-h-0 flex-1">
                <SideNav />
                <div className="flex min-w-0 flex-1 flex-col">
                    <div className="flex min-h-0 flex-1 font-['Open_Sans',sans-serif]">
                        <Canvas />
                        <FilterStrip />
                    </div>
                    <PageTabs />
                </div>
                <Visualizations />
                <DataPane />
            </div>
            <StatusBar />
            <Taskbar />
        </div>
    )
}
